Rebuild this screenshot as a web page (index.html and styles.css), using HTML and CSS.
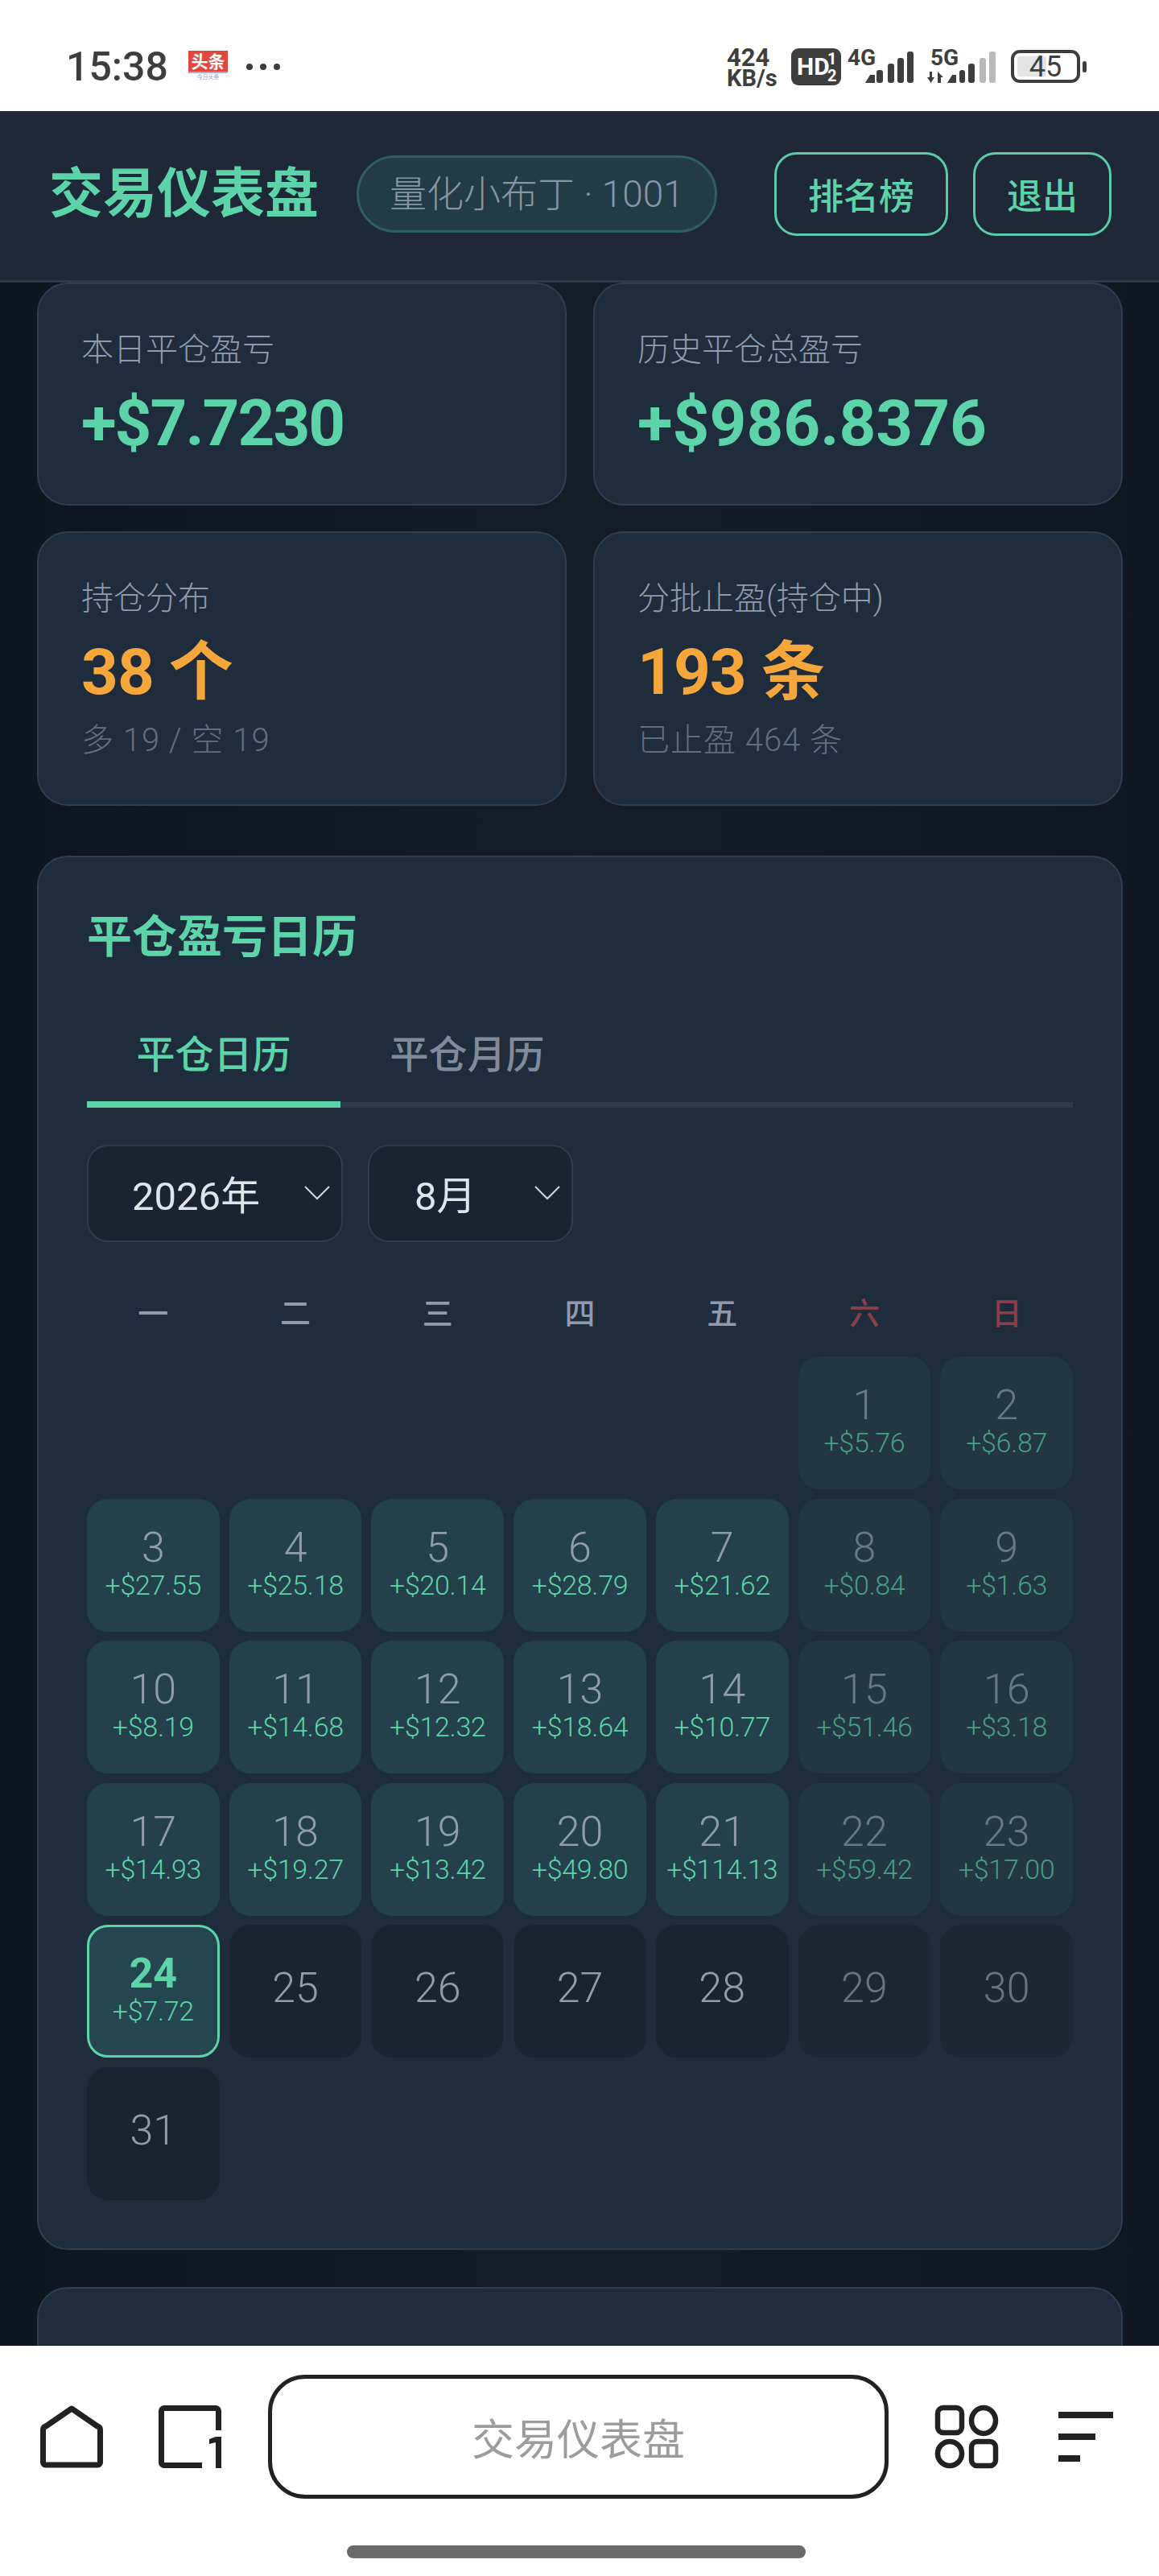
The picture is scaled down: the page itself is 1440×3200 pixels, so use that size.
FILE: index.html
```html
<!DOCTYPE html>
<html lang="zh-CN">
<head>
    <meta charset="UTF-8">
    <meta name="viewport" content="width=device-width, initial-scale=1.0">
    <title>交易仪表盘</title>
    <link rel="stylesheet" href="styles.css">
</head>
<body>

    <!-- Phone status bar -->
    <div class="status-bar">
        <div class="status-left">
            <span class="status-time">15:38</span>
            <div class="news-icon">
                <span class="news-red">头条</span>
                <span class="news-sub">今日头条</span>
            </div>
            <div class="status-dots"><i></i><i></i><i></i></div>
        </div>
        <div class="status-right">
            <svg class="icon-speed" width="68" height="46" viewBox="0 0 68 46">
                <text x="0" y="22" class="speed-num">424</text>
                <text x="0" y="47" class="speed-unit">KB/s</text>
            </svg>
            <svg class="icon-hd" width="62" height="46" viewBox="0 0 62 46">
                <rect width="62" height="46" rx="9" fill="#3e3e3e"/>
                <text x="7" y="33" class="hd-text">HD</text>
                <text x="45" y="20" class="hd-small">1</text>
                <text x="45" y="41" class="hd-small">2</text>
            </svg>
            <svg class="icon-signal" width="82" height="46" viewBox="0 0 82 46">
                <text x="0" y="21" class="sig-text">4G</text>
                <path d="M22 43l6-10h6v10z" fill="#3e3e3e"/>
                <rect x="36" y="27" width="8" height="16" rx="3" fill="#3e3e3e"/>
                <rect x="50" y="19" width="8" height="24" rx="3" fill="#3e3e3e"/>
                <rect x="62" y="12" width="8" height="31" rx="3" fill="#3e3e3e"/>
                <rect x="74" y="4" width="8" height="39" rx="3" fill="#3e3e3e"/>
            </svg>
            <svg class="icon-signal" width="86" height="46" viewBox="0 0 86 46">
                <text x="5" y="21" class="sig-text">5G</text>
                <path d="M1 36h3v-7h3v7h3l-4.500 7z" fill="#3e3e3e"/>
                <path d="M14 29l7 7h-3v7h-4z" fill="#3e3e3e"/>
                <path d="M26 43l6-10h5v10z" fill="#3e3e3e"/>
                <rect x="41" y="27" width="7" height="16" rx="3" fill="#3e3e3e"/>
                <rect x="52" y="19" width="8" height="24" rx="3" fill="#3e3e3e"/>
                <rect x="66" y="12" width="8" height="31" rx="3" fill="#b9b9b9"/>
                <rect x="78" y="4" width="8" height="39" rx="3" fill="#b9b9b9"/>
            </svg>
            <svg class="icon-battery" width="94" height="42" viewBox="0 0 94 42">
                <rect x="2" y="2" width="82" height="37" rx="9" fill="none" stroke="#3e3e3e" stroke-width="4"/>
                <rect x="8" y="8" width="36" height="25" rx="3" fill="#e4e4e4"/>
                <text x="43" y="33" class="bat-text">45</text>
                <rect x="89" y="14" width="5" height="14" rx="2.500" fill="#3e3e3e"/>
            </svg>
        </div>
    </div>

    <header class="top-bar">
        <h1 class="top-title">交易仪表盘</h1>
        <span class="user-badge">量化小布丁 · 1001</span>
        <div class="top-actions">
            <button class="top-btn">排名榜</button>
            <button class="top-btn">退出</button>
        </div>
    </header>

    <main class="content">
        <section class="stats">
            <div class="stat-card">
                <div class="stat-label">本日平仓盈亏</div>
                <div class="stat-value green tight">+$7.7230</div>
            </div>
            <div class="stat-card">
                <div class="stat-label">历史平仓总盈亏</div>
                <div class="stat-value green">+$986.8376</div>
            </div>
            <div class="stat-card">
                <div class="stat-label">持仓分布</div>
                <div class="stat-value orange">38 个</div>
                <div class="stat-sub">多 19 / 空 19</div>
            </div>
            <div class="stat-card">
                <div class="stat-label">分批止盈(持仓中)</div>
                <div class="stat-value orange">193 条</div>
                <div class="stat-sub">已止盈 464 条</div>
            </div>
        </section>

        <section class="panel">
            <h2 class="panel-title">平仓盈亏日历</h2>
            <div class="tabs">
                <div class="tab active">平仓日历</div>
                <div class="tab">平仓月历</div>
            </div>
            <div class="filters">
                <div class="picker picker-year">
                    <span>2026年</span>
                    <svg width="32" height="18" viewBox="0 0 32 18"><path d="M1 1l15 15L31 1" fill="none" stroke="#cfd6de" stroke-width="2"/></svg>
                </div>
                <div class="picker picker-month">
                    <span>8月</span>
                    <svg width="32" height="18" viewBox="0 0 32 18"><path d="M1 1l15 15L31 1" fill="none" stroke="#cfd6de" stroke-width="2"/></svg>
                </div>
            </div>

            <div class="week-row">
                <span>一</span><span>二</span><span>三</span><span>四</span><span>五</span>
                <span class="weekend">六</span><span class="weekend">日</span>
            </div>

            <div class="days">
                <div class="day win off first"><b>1</b><small>+$5.76</small></div>
                <div class="day win off"><b>2</b><small>+$6.87</small></div>
                <div class="day win"><b>3</b><small>+$27.55</small></div>
                <div class="day win"><b>4</b><small>+$25.18</small></div>
                <div class="day win"><b>5</b><small>+$20.14</small></div>
                <div class="day win"><b>6</b><small>+$28.79</small></div>
                <div class="day win"><b>7</b><small>+$21.62</small></div>
                <div class="day win off"><b>8</b><small>+$0.84</small></div>
                <div class="day win off"><b>9</b><small>+$1.63</small></div>
                <div class="day win"><b>10</b><small>+$8.19</small></div>
                <div class="day win"><b>11</b><small>+$14.68</small></div>
                <div class="day win"><b>12</b><small>+$12.32</small></div>
                <div class="day win"><b>13</b><small>+$18.64</small></div>
                <div class="day win"><b>14</b><small>+$10.77</small></div>
                <div class="day win off"><b>15</b><small>+$51.46</small></div>
                <div class="day win off"><b>16</b><small>+$3.18</small></div>
                <div class="day win"><b>17</b><small>+$14.93</small></div>
                <div class="day win"><b>18</b><small>+$19.27</small></div>
                <div class="day win"><b>19</b><small>+$13.42</small></div>
                <div class="day win"><b>20</b><small>+$49.80</small></div>
                <div class="day win"><b>21</b><small>+$114.13</small></div>
                <div class="day win off"><b>22</b><small>+$59.42</small></div>
                <div class="day win off"><b>23</b><small>+$17.00</small></div>
                <div class="day win today"><b>24</b><small>+$7.72</small></div>
                <div class="day"><b>25</b></div>
                <div class="day"><b>26</b></div>
                <div class="day"><b>27</b></div>
                <div class="day"><b>28</b></div>
                <div class="day off"><b>29</b></div>
                <div class="day off"><b>30</b></div>
                <div class="day"><b>31</b></div>
            </div>
        </section>

        <section class="panel panel-next"></section>
    </main>

    <!-- Browser bottom bar -->
    <footer class="browser-bar">
        <div class="browser-row">
            <svg width="78" height="78" viewBox="0 0 78 78">
                <path d="M39 4L71 26a4 4 0 0 1 3.500 4v41a3 3 0 0 1-3 3H6.500a3 3 0 0 1-3-3V30a4 4 0 0 1 3.500-4z" fill="none" stroke="#222" stroke-width="7" stroke-linejoin="round"/>
            </svg>
            <svg class="icon-tabs" width="78" height="78" viewBox="0 0 78 78">
                <path d="M54 74.500H7a3.500 3.500 0 0 1-3.500-3.500V7A3.500 3.500 0 0 1 7 3.500h64A3.500 3.500 0 0 1 74.500 7v24" fill="none" stroke="#222" stroke-width="7"/>
                <path d="M63 42l8-3h7v39h-7V46l-8 2z" fill="#222"/>
            </svg>
            <div class="url-box">交易仪表盘</div>
            <svg class="icon-apps" width="78" height="78" viewBox="0 0 78 78">
                <rect x="3" y="3" width="30" height="31" rx="7" fill="none" stroke="#222" stroke-width="6.500"/>
                <ellipse cx="60" cy="19" rx="15" ry="16" fill="none" stroke="#222" stroke-width="6.500"/>
                <ellipse cx="18" cy="60" rx="15" ry="15" fill="none" stroke="#222" stroke-width="6.500"/>
                <rect x="45" y="45" width="30" height="30" rx="7" fill="none" stroke="#222" stroke-width="6.500"/>
            </svg>
            <svg class="icon-menu" width="68" height="78" viewBox="0 0 68 78">
                <rect x="0" y="8" width="68" height="8" fill="#222"/>
                <rect x="0" y="35" width="46" height="8" fill="#222"/>
                <rect x="0" y="62" width="27" height="8" fill="#222"/>
            </svg>
        </div>
        <div class="home-line"></div>
    </footer>

</body>
</html>
```

FILE: styles.css
```css
/* Basic styling for the page */
* {
    box-sizing: border-box;
}
html, body {
    margin: 0;
    padding: 0;
}
body {
    display: flex;
    flex-direction: column;
    width: 1440px;
    height: 3200px;
    overflow: hidden;
    font-family: Roboto, "Noto Sans CJK SC", sans-serif;
    background-color: #111a23;
    color: #8c98a8;
}
svg {
    overflow: visible;
}

/* Status bar */
.status-bar {
    display: flex;
    justify-content: space-between;
    align-items: center;
    flex: 0 0 138px;
    padding: 0 90px 0 82px;
    background-color: #fff;
    color: #3e3e3e;
}
.status-left {
    display: flex;
    align-items: center;
    margin-top: 28px;
}
.status-time {
    font-size: 50px;
    font-weight: 500;
    line-height: 56px;
    width: 152px;
}
.news-icon {
    display: flex;
    flex-direction: column;
    align-items: center;
    width: 49px;
    height: 40px;
}
.news-red {
    width: 49px;
    height: 28px;
    background-color: #e2463c;
    color: #fff;
    font-size: 21px;
    font-weight: 700;
    line-height: 28px;
    text-align: center;
    border-bottom: 2px solid #9db2e2;
}
.news-sub {
    font-size: 7px;
    line-height: 11px;
    color: #8ea3d8;
}
.status-dots {
    display: flex;
    gap: 9px;
    margin-left: 23px;
}
.status-dots i {
    width: 8px;
    height: 8px;
    border-radius: 50%;
    background-color: #3e3e3e;
}
.status-right {
    display: flex;
    align-items: flex-start;
    height: 48px;
    margin-top: 30px;
}
.icon-hd {
    margin-left: 12px;
}
.icon-signal {
    margin-left: 8px;
}
.icon-signal + .icon-signal {
    margin-left: 16px;
}
.icon-battery {
    margin: 2px 0 0 19px;
}
.speed-num {
    font: 700 31px Roboto, sans-serif;
    fill: #3e3e3e;
}
.speed-unit {
    font: 700 29px Roboto, sans-serif;
    fill: #3e3e3e;
}
.hd-text {
    font: 700 30px Roboto, sans-serif;
    fill: #fff;
}
.hd-small {
    font: 700 20px Roboto, sans-serif;
    fill: #fff;
}
.sig-text {
    font: 700 28px Roboto, sans-serif;
    fill: #3e3e3e;
}
.bat-text {
    font: 400 36px Roboto, sans-serif;
    fill: #3e3e3e;
    text-anchor: middle;
}

/* Header */
.top-bar {
    display: flex;
    align-items: center;
    flex: 0 0 213px;
    padding: 0 59px 4px 61px;
    background-color: #1e2836;
    border-bottom: 3px solid #2d3947;
}
.top-title {
    margin: 0;
    font-size: 67px;
    font-weight: 700;
    color: #5cd3a9;
    line-height: 80px;
}
.user-badge {
    margin-left: 47px;
    padding: 0 38px;
    height: 96px;
    line-height: 90px;
    font-size: 46px;
    font-weight: 300;
    color: #8795a5;
    background-color: #233b45;
    border: 3px solid #2f5e5f;
    border-radius: 48px;
    white-space: nowrap;
}
.top-actions {
    display: flex;
    gap: 31px;
    margin-left: auto;
}
.top-btn {
    height: 104px;
    padding: 0 39px;
    font-family: inherit;
    font-size: 44px;
    font-weight: 500;
    color: #5cd3a9;
    background: none;
    border: 3px solid #5cc9a7;
    border-radius: 28px;
}

/* Page content */
.content {
    flex: 1;
    min-height: 0;
    overflow: hidden;
    padding: 0 45px 0 46px;
    background: linear-gradient(90deg, #0d151e 0%, #141c26 50%, #0f1720 100%);
}
.stats {
    display: grid;
    grid-template-columns: 658px 658px;
    gap: 32px 33px;
}
.stat-card {
    padding: 54px 40px 50px 53px;
    background-color: #1f2c3c;
    border: 2px solid #303e4f;
    border-radius: 38px;
}
.stat-label {
    font-size: 40px;
    font-weight: 300;
    line-height: 56px;
    color: #8f9bab;
}
.stat-value {
    margin-top: 13px;
    font-size: 80px;
    font-weight: 700;
    line-height: 100px;
}
.stat-value.green {
    color: #5cd3a9;
}
.stat-value.tight {
    letter-spacing: -2px;
}
.stat-value.orange {
    color: #f5a73b;
    letter-spacing: -1px;
}
.stat-sub {
    margin-top: 6px;
    font-size: 40px;
    font-weight: 300;
    line-height: 58px;
    letter-spacing: 1px;
    color: #616e7e;
}

.panel {
    margin-top: 62px;
    padding: 62px 60px 60px;
    background-color: #1f2c3c;
    border: 2px solid #303e4f;
    border-radius: 38px;
}
.panel-title {
    margin: 0;
    font-size: 56px;
    font-weight: 700;
    line-height: 74px;
    color: #5cd3a9;
}
.tabs {
    display: flex;
    margin-top: 70px;
    border-bottom: 7px solid #2e3b4b;
}
.tab {
    position: relative;
    width: 315px;
    padding-bottom: 18px;
    font-size: 48px;
    font-weight: 500;
    line-height: 80px;
    text-align: center;
    color: #7f8b9b;
}
.tab.active {
    color: #5cd3a9;
}
.tab.active::after {
    content: "";
    position: absolute;
    left: 0;
    right: 0;
    bottom: -7px;
    height: 8px;
    background-color: #5cd3a9;
}
.filters {
    display: flex;
    gap: 31px;
    margin-top: 46px;
}
.picker {
    display: flex;
    align-items: center;
    height: 121px;
    padding-bottom: 2px;
    font-size: 49px;
    font-weight: 400;
    color: #dfe4ea;
    background-color: #1a2431;
    border: 2px solid #303c4c;
    border-radius: 26px;
}
.picker-year {
    width: 318px;
    padding-left: 54px;
}
.picker-month {
    width: 255px;
    padding-left: 56px;
}
.picker span {
    flex: 1;
}
.picker svg {
    margin-right: 14px;
}
.week-row {
    display: grid;
    grid-template-columns: repeat(7, 1fr);
    gap: 12px;
    margin-top: 59px;
    font-size: 38px;
    font-weight: 500;
    line-height: 60px;
    text-align: center;
    color: #8f9bab;
}
.week-row .weekend {
    color: #8c3f4a;
}
.days {
    display: grid;
    grid-template-columns: repeat(7, 1fr);
    gap: 11.500px 12px;
    margin-top: 23px;
}
.day {
    display: flex;
    flex-direction: column;
    justify-content: center;
    align-items: center;
    height: 165px;
    padding-bottom: 7px;
    background-color: #1a2430;
    border-radius: 26px;
}
.day b {
    font-size: 52px;
    font-weight: 300;
    line-height: 56px;
    color: #919caa;
}
.day small {
    font-size: 34px;
    font-weight: 300;
    line-height: 36px;
    letter-spacing: -0.3px;
    color: #5cd3a9;
}
.day.first {
    grid-column-start: 6;
}
.day.win {
    background-color: #24414b;
}
.day.off b,
.day.off small {
    opacity: 0.65;
}
.day.win.off {
    background-color: #223741;
}
.day.off:not(.win) {
    background-color: #1c2734;
}
.day.today {
    background-color: #25464e;
    border: 3px solid #5cd3a9;
}
.day.today b {
    font-weight: 700;
    color: #5cd3a9;
}
.panel-next {
    margin-top: 46px;
    height: 400px;
}

/* Bottom browser bar */
.browser-bar {
    flex: 0 0 286px;
    background-color: #fff;
}
.browser-row {
    display: flex;
    align-items: center;
    height: 190px;
    padding: 36px 57px 0 50px;
}
.icon-tabs {
    margin-left: 69px;
}
.url-box {
    display: flex;
    justify-content: center;
    align-items: center;
    width: 771px;
    height: 154px;
    margin-left: 58px;
    font-size: 53px;
    color: #9c9c9c;
    border: 5px solid #222;
    border-radius: 46px;
}
.icon-apps {
    margin-left: 58px;
}
.icon-menu {
    margin-left: 75px;
}
.home-line {
    width: 570px;
    height: 16px;
    margin: 58px 0 0 431px;
    background-color: #6b6b6b;
    border-radius: 8px;
}
```
